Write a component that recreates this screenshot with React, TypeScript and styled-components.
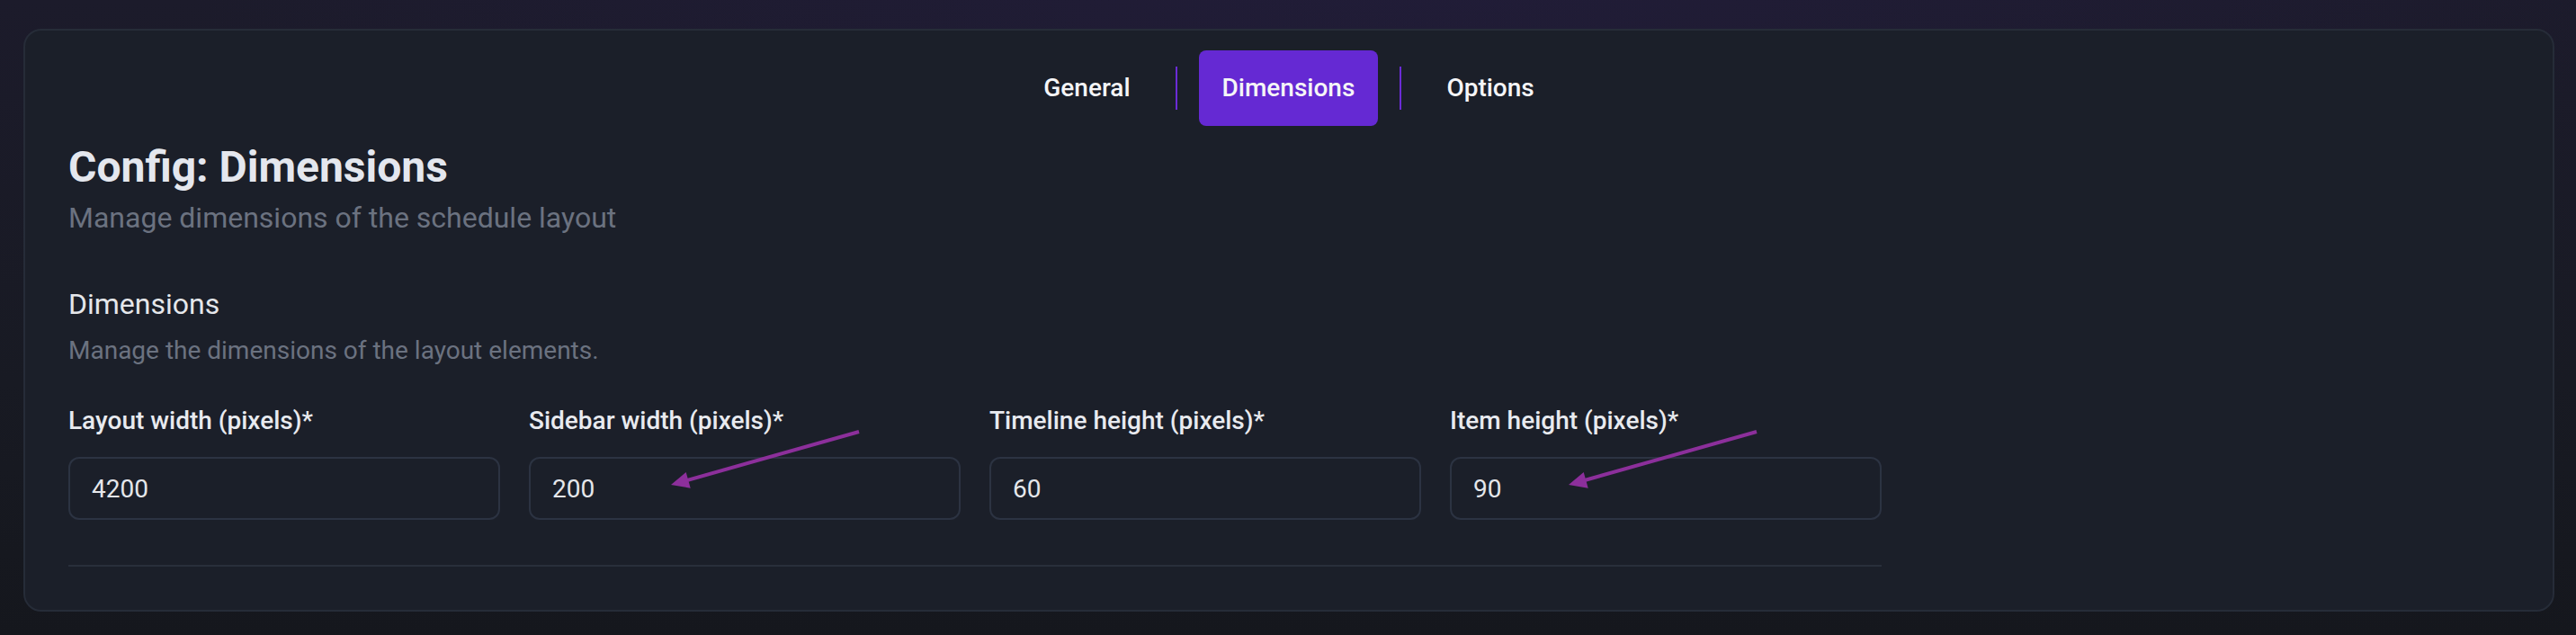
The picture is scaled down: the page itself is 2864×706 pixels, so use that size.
import React from "react";
import styled, { createGlobalStyle } from "styled-components";

const GlobalStyle = createGlobalStyle`
  html, body {
    margin: 0;
    padding: 0;
  }
  body {
    font-family: Roboto, "Noto Sans", "Liberation Sans", sans-serif;
    background: #16181f;
    color: #e5e7eb;
  }
  * { box-sizing: border-box; }
`;

const Page = styled.div`
  min-height: 706px;
  padding: 32px 24px 29px 26px;
  background:
    radial-gradient(ellipse 70% 120% at 55% -20%, rgba(40, 30, 74, 0.5) 0%, rgba(40, 30, 74, 0) 70%),
    linear-gradient(180deg, #1c1b2b 0%, #181a23 60%, #15171d 100%);
`;

const Card = styled.section`
  position: relative;
  background: #1b1f29;
  border: 2px solid #262c38;
  border-radius: 20px;
  padding: 22px 48px 48px;
  min-height: 645px;
`;

const TabBar = styled.nav`
  display: flex;
  justify-content: center;
  align-items: center;
  gap: 24px;
`;

const TabButton = styled.button<{ $active?: boolean }>`
  height: 84px;
  padding: 0 26px;
  border: none;
  border-radius: 8px;
  background: ${(p) => (p.$active ? "#6529d3" : "transparent")};
  color: #f5f5f7;
  font-family: Roboto, "Liberation Sans", sans-serif;
  font-size: 28px;
  font-weight: 500;
  line-height: 40px;
  cursor: pointer;
`;

const TabDivider = styled.span`
  display: block;
  width: 2px;
  height: 48px;
  background: #6b2bd6;
`;

const Header = styled.header`
  margin-top: 14px;
`;

const Title = styled.h1`
  margin: 0;
  font-size: 48px;
  line-height: 64px;
  font-weight: 700;
  color: #e4e7ee;
`;

const Subtitle = styled.p`
  margin: 0;
  font-size: 32px;
  line-height: 48px;
  font-weight: 400;
  color: #6b7280;
`;

const Section = styled.div`
  margin-top: 48px;
  max-width: 2016px;
`;

const SectionTitle = styled.h2`
  margin: 0;
  font-size: 32px;
  line-height: 48px;
  font-weight: 400;
  color: #e5e7eb;
`;

const SectionDesc = styled.p`
  margin: 8px 0 0;
  font-size: 28px;
  line-height: 40px;
  color: #6b7280;
`;

const FieldGrid = styled.div`
  margin-top: 38px;
  display: grid;
  grid-template-columns: repeat(4, 480px);
  column-gap: 32px;
`;

const Field = styled.div`
  position: relative;
  display: flex;
  flex-direction: column;
  gap: 20px;
`;

const Label = styled.label`
  font-size: 28px;
  line-height: 40px;
  font-weight: 500;
  color: #e8eaef;
`;

const Input = styled.input`
  height: 70px;
  width: 100%;
  padding: 0 24px;
  border: 2px solid #2c3342;
  border-radius: 12px;
  background: #1b1f29;
  color: #e5e7eb;
  font-family: Roboto, "Liberation Sans", sans-serif;
  font-size: 28px;
  outline: none;
`;

const Divider = styled.hr`
  margin: 50px 0 0;
  border: none;
  height: 2px;
  background: #292f3b;
`;

const ArrowMark = styled.svg`
  position: absolute;
  width: 224px;
  height: 72px;
  pointer-events: none;
  overflow: visible;
`;

function Arrow({ left, top }: { left: number; top: number }) {
  return (
    <ArrowMark style={{ left, top }} viewBox="0 0 224 72">
      <line x1="215" y1="6" x2="22" y2="60.5" stroke="#8c2f9b" strokeWidth="4" strokeLinecap="butt" />
      <polygon points="6,65 22.7,51 27.7,68.7" fill="#8c2f9b" />
    </ArrowMark>
  );
}

const fields = [
  { label: "Layout width (pixels)*", value: "4200" },
  { label: "Sidebar width (pixels)*", value: "200", arrow: { left: 152, top: 26 } },
  { label: "Timeline height (pixels)*", value: "60" },
  { label: "Item height (pixels)*", value: "90", arrow: { left: 126, top: 26 } },
];

export default function App() {
  return (
    <>
      <GlobalStyle />
      <Page>
        <Card>
          <TabBar>
            <TabButton>General</TabButton>
            <TabDivider />
            <TabButton $active>Dimensions</TabButton>
            <TabDivider />
            <TabButton>Options</TabButton>
          </TabBar>
          <Header>
            <Title>Config: Dimensions</Title>
            <Subtitle>Manage dimensions of the schedule layout</Subtitle>
          </Header>
          <Section>
            <SectionTitle>Dimensions</SectionTitle>
            <SectionDesc>Manage the dimensions of the layout elements.</SectionDesc>
            <FieldGrid>
              {fields.map((f) => (
                <Field key={f.label}>
                  <Label>{f.label}</Label>
                  <Input defaultValue={f.value} />
                  {f.arrow && <Arrow left={f.arrow.left} top={f.arrow.top} />}
                </Field>
              ))}
            </FieldGrid>
            <Divider />
          </Section>
        </Card>
      </Page>
    </>
  );
}
